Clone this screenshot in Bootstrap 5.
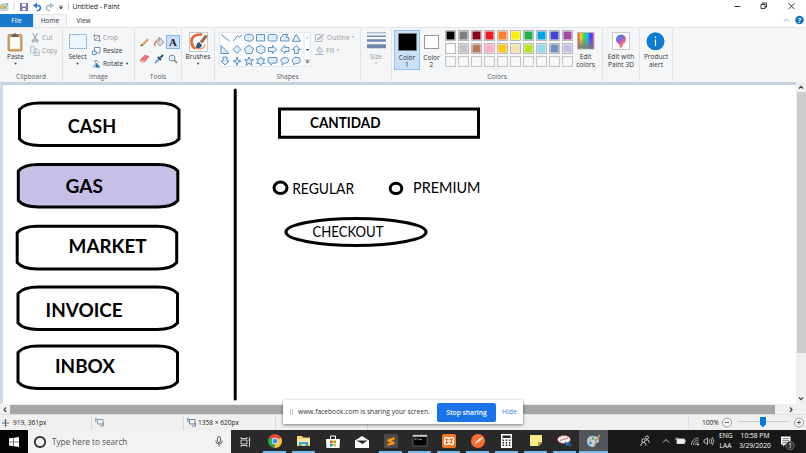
<!DOCTYPE html>
<html lang="en">
<head>
    <meta charset="UTF-8">
    <meta name="viewport" content="width=device-width, initial-scale=1">
    <title>Untitled - Paint</title>
    <link href="https://cdn.jsdelivr.net/npm/bootstrap@5.3.0/dist/css/bootstrap.min.css" rel="stylesheet">
    <script src="https://cdn.jsdelivr.net/npm/bootstrap@5.3.0/dist/js/bootstrap.bundle.min.js"></script>

    <style>
        body {
            font-family: "Open Sans", "Noto Sans", sans-serif;
            font-size: 6.6px;
            line-height: 7.5px;
            color: #333;
            width: 806px;
            height: 453px;
            overflow: hidden;
            white-space: nowrap;
        }

        svg { display: block; flex: none; overflow: visible; }

        .title-bar { height: 14px; color: #111; font-size: 6.8px; }
        .doc-title { margin-left: 2.5px; }
        .tab-bar { height: 13px; font-size: 6.5px; }
        .file-tab { width: 33px; background: #1979ca; color: #fff; }
        .home-tab { width: 34px; background: #f5f6f7; border: 1px solid #e2e4e7; border-bottom: 0; }
        .view-tab { width: 33px; }

        .ribbon { height: 55px; background: #f5f6f7; border-top: 1px solid #e3e5e8; }
        .group { border-right: 1px solid #e2e3e4; height: 52px; margin-top: 1px; flex: none; }
        .group-body { height: 43px; }
        .group-label { height: 9px; line-height: 9px; color: #5c5c5c; text-align: center; }
        .tool { padding-top: 3px; text-align: center; flex: none; }
        .tool svg { margin: 0 auto 1px; }
        .caret { font-size: 4px; line-height: 5px; }
        .faded { color: #999; }
        .faded .caret { font-size: 3px; }
        .tool-rows { padding-top: 2px; }
        .tool-row { height: 13px; gap: 2px; }
        .g-clip { width: 63px; }
        .g-image { width: 72px; }
        .g-tools { width: 47px; }
        .g-brush { width: 33px; }
        .g-shapes { width: 146px; }
        .g-size { width: 31px; }
        .g-colors { width: 211px; }
        .g-3d { width: 37px; }
        .g-alert { width: 33px; }
        .tool-paste { width: 31px; }
        .tool-select { width: 29px; }
        .tool-edit { width: 25px; }
        .tools-grid { display: grid; grid-template-columns: repeat(3, 14px); grid-auto-rows: 17px; padding: 4px 0 0 2px; justify-content: center; place-items: center; }
        .text-tool { width: 14px; height: 14px; background: #c9e0f7; border: 1px solid #82b5e8; font: bold 11px/12px "Liberation Serif", serif; color: #222; text-align: center; }
        .shape-list { margin: 3px 0 0 4px; }
        .slot { width: 23px; height: 40px; border: 1px solid transparent; padding-top: 2px; margin-top: 1px; text-align: center; flex: none; line-height: 7.2px; }
        .slot.chosen { background: #c9e0f7; border-color: #92c0ea; width: 26px; margin-left: 2px; }
        .slot-name { padding-top: 2.5px; }
        .ink { border: 1px solid #999; box-shadow: inset 0 0 0 1px #fff; margin: 0 auto; }
        .ink-first { width: 19px; height: 18px; background: #000; border-color: #777; box-shadow: none; }
        .ink-second { width: 15px; height: 14px; margin: 2px auto; background: #fff; }
        .palette { display: grid; grid-template-columns: repeat(10, 11px); grid-auto-rows: 11px; gap: 2px; margin: 1px 0 0 2px; height: 37px; }
        .swatch { border: 1px solid #bbb; box-shadow: inset 0 0 0 .5px #eee; }
        .swatch.empty { background: #f8f8f9; border-color: #c6c6c6; }

        .workspace { height: 322px; }
        .easel { width: 796px; height: 322px; background: #fff; border-top: 3px solid #c8d1e0; border-left: 3px solid #d0dbea; flex: none; }
        .v-scroll { width: 10px; background: #f0f0f0; }
        .v-arrow { height: 10px; }
        .v-thumb { height: 261px; margin-left: 1px; background: #cdcdcd; }
        .h-scroll { height: 10px; background: #f0f0f0; }
        .h-thumb { width: 765px; height: 9px; background: #a6a6a6; }
        .drawing text { font-family: Lato, sans-serif; fill: #000; }

        .status-bar { height: 16px; background: #f0f0f0; border-top: 1px solid #e0e0e0; font-size: 6.6px; color: #222; }
        .status-cell { width: 92px; height: 15px; border-right: 1px solid #dadada; flex: none; }
        .status-cell .size-icon { margin-left: 3px; }
        .zoom-cell { width: 118px; height: 15px; padding-left: 13px; }

        .taskbar { height: 23px; background: #292929; color: #fff; }
        .start { width: 28px; background: #050505; }
        .search { width: 203px; background: #f2f2f2; color: #555; font-size: 8.2px; gap: 6px; padding: 0 8px 0 6px; }
        .app { width: 29px; height: 23px; flex: none; }
        .app-line { width: 23px; height: 2px; background: #76b9ed; }
        .app.active-app { background: #50565b; }
        .active-app .app-line { width: 29px; }
        .tray { background: #181818; font-size: 6.7px; line-height: 10px; text-align: center; }
        .lang { margin-top: 1px; width: 13px; }
        .clock { margin: 1px 0 0 4px; width: 38px; }

        .share-bar { left: 283px; top: 400px; width: 240px; height: 24px; background: #fff; box-shadow: 0 1px 3px rgba(0, 0, 0, .5); font-size: 6.65px; color: #333; padding-left: 7px; }
        .share-text { margin-left: 5px; width: 139px; }
        .stop-btn { width: 59px; height: 19px; background: #1a73e8; color: #fff; border-radius: 2px; font-size: 6.7px; font-weight: 600; padding: 0; line-height: 19px; border: 0; }
        .hide-link { color: #3b78e7; font-size: 6.8px; margin-left: 6px; }
    </style>
</head>
<body class="position-relative bg-white">

<header class="title-bar d-flex align-items-center">
    <svg width="70" height="14" viewBox="0 0 70 14">
        <path d="M0 5l5-2 3 1v6l-7 1z" fill="#cfe3ee" stroke="#8fb2c8" stroke-width=".6"/>
        <path d="M1 9V6M3 9V4M5 9V6" stroke="#e0a040" stroke-width="1.3"/>
        <path d="M4 9l4-6" stroke="#58a55a"/>
        <path d="M14 3v7M68.500 3v7" stroke="#bbb" stroke-width=".7"/>
        <path d="M20.500 3.500h7v7h-7z" fill="#8877bd" stroke="#7563b0"/>
        <path d="M22 3.500h4v3h-4zM22.500 8h3v2.500h-3z" fill="#fff"/>
        <path d="M35 5.500h3q2.500.3 2.500 2.500T37 10.700" fill="none" stroke="#2f7dc8" stroke-width="1.600"/>
        <path d="M37 2.500v6l-4-3z" fill="#2f7dc8"/>
        <path d="M52 5.500h-3q-2.500.3-2.500 2.500T50 10.700" fill="none" stroke="#a9bccf" stroke-width="1.600"/>
        <path d="M50 2.500v6l4-3z" fill="#a9bccf"/>
        <path d="M59 6h4M59.500 7.500h3L61 9z" fill="#333" stroke="#333" stroke-width=".6"/>
    </svg>
    <span class="doc-title">Untitled - Paint</span>
    <svg class="ms-auto" width="72" height="14" viewBox="0 0 72 14" fill="none" stroke="#222" stroke-width=".9">
        <path d="M.5 6.500h6M27 4.500h4v4h-4zM28.500 4.500v-1.500h4v4h-1.500M54.500 3.200l6 6M60.500 3.200l-6 6"/>
    </svg>
</header>

<nav class="tab-bar d-flex text-center">
    <div class="file-tab d-flex align-items-center justify-content-center">File</div>
    <div class="home-tab d-flex align-items-center justify-content-center">Home</div>
    <div class="view-tab d-flex align-items-center justify-content-center">View</div>
    <svg class="ms-auto" width="24" height="13" viewBox="782 14 24 13">
        <path d="M784 21.500l2.500-2.500 2.500 2.500" fill="none" stroke="#888" stroke-width=".8"/>
        <circle cx="799.500" cy="20" r="4.300" fill="#1272c4"/>
        <text x="797.700" y="22.500" font-size="7" font-weight="700" fill="#fff">?</text>
    </svg>
</nav>

<section class="ribbon d-flex">
    <div class="group g-clip">
        <div class="group-body d-flex">
            <div class="tool tool-paste">
                <svg width="17" height="20" viewBox="0 0 17 20">
                    <rect x="1" y="2.500" width="14" height="16.500" rx="1" fill="#d9a760" stroke="#a77a3d" stroke-width=".7"/>
                    <path d="M3 5h10v12H3z" fill="#fcfcfc" stroke="#aaa" stroke-width=".3"/>
                    <path d="M4.500 2.500h2q1.500-3 3 0h2v2.500h-7z" fill="#666"/>
                </svg>
                <div>Paste</div><div class="caret">▼</div>
            </div>
            <div class="faded tool-rows">
                <div class="tool-row d-flex align-items-center">
                    <svg width="9" height="10" viewBox="0 0 9 10" fill="none" stroke="#929aa5" stroke-width="1"><path d="M1.700 0l3.800 7M6.500 0L3 7"/><circle cx="2.300" cy="8" r="1.200"/><circle cx="6" cy="8" r="1.200"/></svg>
                    <span>Cut</span>
                </div>
                <div class="tool-row d-flex align-items-center">
                    <svg width="9" height="10" viewBox="1 0 9 10" fill="#eef2f7" stroke="#a9b6c6" stroke-width=".8"><path d="M.5.500h3.500l1.500 1.500v5h-5zM4 3h3.500l2 2v4.500H4z"/><path d="M5.500 6h2.500M5.500 7.700h2.500"/></svg>
                    <span>Copy</span>
                </div>
            </div>
        </div>
        <div class="group-label">Clipboard</div>
    </div>

    <div class="group g-image">
        <div class="group-body d-flex">
            <div class="tool tool-select">
                <svg width="18" height="20" viewBox="0 0 18 20"><rect x=".5" y="2.500" width="17" height="14" fill="#edf5fc" stroke="#4383bd" stroke-width=".8" stroke-dasharray="1.500 .8"/></svg>
                <div>Select</div><div class="caret">▼</div>
            </div>
            <div class="tool-rows">
                <div class="tool-row d-flex align-items-center faded">
                    <svg width="9" height="8" viewBox="-1 0 9 8" fill="none" stroke="#9aa5b1"><path d="M1.500 0v6.500H8M0 1.500h6.500V8M2 6l5-5"/></svg>
                    <span>Crop</span>
                </div>
                <div class="tool-row d-flex align-items-center">
                    <svg width="9" height="8" viewBox="0 0 9 8" fill="#fff" stroke="#3f76a8" stroke-width=".8"><path d="M2.500.500h5.500v5.500H2.500z"/><path d="M.5 4h3.500v3.500H.5z"/></svg>
                    <span>Resize</span>
                </div>
                <div class="tool-row d-flex align-items-center">
                    <svg width="9" height="8" viewBox="0 0 9 8"><path d="M3.500 7.500V2l5 5.500z" fill="#2474b5"/><path d="M0 7.500h3V4z" fill="#9ac4e6"/><path d="M2 1.500q3-2.500 4.500 1" fill="none" stroke="#3974a7" stroke-width=".8"/></svg>
                    <span>Rotate</span><span class="caret">▼</span>
                </div>
            </div>
        </div>
        <div class="group-label">Image</div>
    </div>

    <div class="group g-tools">
        <div class="group-body tools-grid">
            <svg width="10" height="10" viewBox="0 0 10 10"><path d="M2 8l6-6" stroke="#e7b55e" stroke-width="2"/><path d="M2.700 8.700l6-6" stroke="#a77632" stroke-width=".6"/><path d="M.5 9.500l.8-2.500 1.700 1.700z" fill="#444"/></svg>
            <svg width="11" height="10" viewBox="0 0 11 10"><path d="M2 4l4-3 4 4-4 4z" fill="#d5dde7" stroke="#71879e" stroke-width=".8"/><path d="M5 5V0" stroke="#c97a5b"/><path d="M2.500 4Q0 6 1 9" fill="none" stroke="#db7b5b" stroke-width="1.500"/></svg>
            <div class="text-tool">A</div>
            <svg width="10" height="9" viewBox="0 0 10 9"><path d="M0 6l5-5 4 1.500L4.500 8 1 8z" fill="#e87979" stroke="#c95d5d" stroke-width=".5"/><path d="M0 6l3.500.5 1 1.500H1z" fill="#f7b1ab"/></svg>
            <svg width="10" height="10" viewBox="0 0 10 10"><path d="M1 9l5-5" stroke="#6f9dc4" stroke-width="1.800"/><path d="M4 3l3 3M6.500 3.500L9 1" stroke="#244f7d" stroke-width="2"/></svg>
            <svg width="10" height="10" viewBox="0 0 10 10"><circle cx="4" cy="4" r="3" fill="#dceefc" stroke="#7e8d9c"/><path d="M6.300 6.300L9 9" stroke="#8b7358" stroke-width="1.500"/></svg>
        </div>
        <div class="group-label">Tools</div>
    </div>

    <div class="group g-brush">
        <div class="tool">
            <svg width="19" height="20" viewBox="0 0 19 20">
                <rect x=".5" y=".5" width="18" height="19" fill="#fff" stroke="#b9b9b9" stroke-width=".8"/>
                <path d="M13 2.500Q3 2 2.500 9q0 6 4 7.500" fill="none" stroke="#dc6034" stroke-width="2.600"/>
                <path d="M4 11q1 6 7 6 5-1 5-5" fill="none" stroke="#ee9a72" stroke-width="1.500"/>
                <path d="M12 10.500l5.500-7" stroke="#9b6a48" stroke-width="3"/><path d="M7 16q0-5 3-6l3 3q-1 4-6 3z" fill="#31547d"/>
            </svg>
            <div>Brushes</div><div class="caret">▼</div>
        </div>
    </div>

    <div class="group g-shapes">
        <div class="group-body d-flex">
            <svg class="shape-list" width="92" height="35" viewBox="219 32 92 35">
                <path d="M219.500 32.500h91v34h-91z" fill="#fafcfe" stroke="#dbe1e7" stroke-width=".7"/>
                <path d="M304 32.500v34" stroke="#dbe1e7" stroke-width=".7"/>
                <g fill="#e0eefa" stroke="#3c79ae" stroke-width=".8">
                    <path d="M221 34.500l8.500 6.500"/>
                    <path d="M233 40.500q2 0 3-3t2.500-1 3.500-2" fill="none"/>
                    <ellipse cx="249" cy="37.700" rx="4.500" ry="3.500"/>
                    <path d="M256.500 34.500h8v6.500h-8z"/>
                    <rect x="268" y="34.500" width="9" height="6.500" rx="1.500"/>
                    <path d="M280.500 41v-3l2.500-3.500h5l-2 3h2.800v3.500z"/>
                    <path d="M296.300 34.300l4 7h-8z"/>
                    <path d="M221 45.500v8h8z"/>
                    <path d="M237 45.500l4 4-4 4-4-4z"/>
                    <path d="M249 45.300l4.500 3.200-1.800 5h-5.400l-1.800-5z"/>
                    <path d="M260.700 45.300l4.300 2.200v4.200l-4.300 2.200-4.300-2.200v-4.200z"/>
                    <path d="M268.500 47.500h4v-2l4.300 4-4.300 4v-2h-4z"/>
                    <path d="M289 47.500h-4v-2l-4.300 4 4.300 4v-2h4z"/>
                    <path d="M294.300 53.500v-4h-2l4-4 4 4h-2v4z"/>
                    <path d="M223 57v4h-2l4 4 4-4h-2v-4z"/>
                    <path d="M237 57l1 3.200 3 1-3 1-1 3.200-1-3.200-3-1 3-1z"/>
                    <path d="M249 57l1.200 2.800h3.300l-2.500 2 1 3.500-3-2-3 2 1-3.500-2.500-2h3.300z"/>
                    <path d="M260.700 56.800l1.300 2.200h2.700l-1.400 2.200 1.400 2.200H262l-1.300 2.200-1.300-2.200h-2.700l1.400-2.200-1.400-2.200h2.700z"/>
                    <path d="M269 57.500h7q1 0 1 1v3.500q0 1-1 1h-3l-2 2.200v-2.200h-2q-1 0-1-1v-3.500q0-1 1-1z"/>
                    <path d="M282 65l.5-2.200q-2-1-1.800-2.500.5-2.800 4-2.800t4.300 2.800q-.5 3-4.500 3z"/>
                    <path d="M293 58.500q1.500-2 4-1 3-.5 3 2 1.200 2.500-1 3.500-1.500 1-3.500.5l-1.500 1.500-.2-2q-2-1-1.300-2.500-.6-1 .5-2z"/>
                </g>
                <path d="M306 38.500l1.500-1.500 1.500 1.500z" fill="#aaa"/>
                <path d="M305.700 49h3.600l-1.800 2zM305.700 61.500h3.600l-1.800 2zM305.500 59.800h4v.8h-4z" fill="#444"/>
            </svg>
            <div class="faded tool-rows ps-1">
                <div class="tool-row d-flex align-items-center">
                    <svg width="10" height="8" viewBox="0 0 10 8" fill="none" stroke="#a1adb8" stroke-width=".8"><path d="M7 3v4.500H.5V.500H6"/><path d="M2.500 6L8.500.500" stroke-width="1.500"/></svg>
                    <span>Outline</span><span class="caret">▼</span>
                </div>
                <div class="tool-row d-flex align-items-center">
                    <svg width="9" height="9" viewBox="0 0 9 9" fill="#dfe5eb" stroke="#a1adb8" stroke-width=".8"><path d="M1.500 4l3-3 3.500 4-3 3zM0 8.500h9M4 4V0"/></svg>
                    <span>Fill</span><span class="caret">▼</span>
                </div>
            </div>
        </div>
        <div class="group-label">Shapes</div>
    </div>

    <div class="group g-size">
        <div class="tool faded">
            <svg width="19" height="20" viewBox="0 0 19 20" fill="#7389b0"><path d="M0 .5h19v.8H0zM0 3.500h19v1.600H0zM0 7.300h19v2.500H0zM0 12.300h19v4H0z"/></svg>
            <div>Size</div><div class="caret">▼</div>
        </div>
    </div>

    <div class="group g-colors">
        <div class="group-body d-flex">
            <div class="slot chosen">
                <div class="ink ink-first"></div>
                <div class="slot-name">Color<br>1</div>
            </div>
            <div class="slot">
                <div class="ink ink-second"></div>
                <div class="slot-name">Color<br>2</div>
            </div>
            <div class="palette" id="palette"></div>
            <div class="tool tool-edit">
                <svg width="17" height="20" viewBox="0 0 17 20">
                    <defs>
                        <linearGradient id="hues"><stop offset="0" stop-color="#f33"/><stop offset=".2" stop-color="#fc3"/><stop offset=".4" stop-color="#3d4"/><stop offset=".6" stop-color="#2be"/><stop offset=".8" stop-color="#43f"/><stop offset="1" stop-color="#e3b"/></linearGradient>
                        <linearGradient id="dusk" x2="0" y2="1"><stop offset=".3" stop-color="#888" stop-opacity="0"/><stop offset="1" stop-color="#777"/></linearGradient>
                    </defs>
                    <rect x=".5" y=".5" width="16.500" height="16.500" fill="url(#hues)" stroke="#bbb"/><rect x="1" y="1" width="15.500" height="15.500" fill="url(#dusk)"/>
                </svg>
                <div>Edit<br>colors</div>
            </div>
        </div>
        <div class="group-label">Colors</div>
    </div>

    <div class="group g-3d">
        <div class="tool">
            <svg width="18" height="20" viewBox="0 0 18 20">
                <defs><linearGradient id="drop" x2=".7" y2="1"><stop offset="0" stop-color="#24a8ed"/><stop offset=".4" stop-color="#7569dd"/><stop offset=".65" stop-color="#ec5a9d"/><stop offset="1" stop-color="#f8a23b"/></linearGradient></defs>
                <rect x=".5" y=".5" width="17" height="17" fill="#fff" stroke="#c9c9c9"/>
                <path d="M9 2.500q5 .3 5 5 0 3-3 4.500l-1 3.500q-1 1.300-2 0L7 12Q4 10.500 4 7.500q0-4.700 5-5z" fill="url(#drop)"/>
            </svg>
            <div>Edit with<br>Paint 3D</div>
        </div>
    </div>
    <div class="group g-alert">
        <div class="tool">
            <svg width="18" height="20" viewBox="0 0 18 20"><circle cx="8.500" cy="9.300" r="9" fill="#0f7bd0"/><path d="M8.500 7.500v6.500M8.500 4.500v1.500" stroke="#fff" stroke-width="1.200"/></svg>
            <div>Product<br>alert</div>
        </div>
    </div>
</section>

<main class="workspace d-flex">
    <div class="easel">
        <svg class="drawing" width="793" height="319" viewBox="3 85 793 319">
            <defs>
                <path id="menuBox" d="M0 6.500c3-3.500 10-6.500 20-6.500h119.500c10 0 17 3 20 6.500v29.600c-3 3.500-10 6.500-20 6.500H20c-10 0-17-3-20-6.500z"/>
            </defs>
            <g fill="#fff" stroke="#000" stroke-width="3" stroke-linejoin="round">
                <use href="#menuBox" x="19.500" y="102.900"/>
                <use href="#menuBox" x="18.300" y="164.400" fill="#c8bfe7"/>
                <use href="#menuBox" x="17.200" y="226.300"/>
                <use href="#menuBox" x="18" y="287"/>
                <use href="#menuBox" x="18" y="346"/>
            </g>
            <g fill="#fff" stroke="#000" stroke-width="3">
                <path d="M235.200 90v309" stroke-linecap="round"/>
                <path d="M279.500 109h199v28.200h-199z"/>
                <ellipse cx="280.500" cy="187.800" rx="6.500" ry="5.700"/>
                <ellipse cx="396" cy="188.400" rx="5.800" ry="5.100"/>
                <ellipse cx="356" cy="232" rx="70" ry="13.400"/>
            </g>
            <g font-size="18.500" font-weight="700">
                <text x="67.700" y="132.700" textLength="48.500" lengthAdjust="spacingAndGlyphs">CASH</text>
                <text x="65.500" y="193.400" textLength="37.500" lengthAdjust="spacingAndGlyphs">GAS</text>
                <text x="68.600" y="253" textLength="78" lengthAdjust="spacingAndGlyphs">MARKET</text>
                <text x="45.600" y="316.700" textLength="77" lengthAdjust="spacingAndGlyphs">INVOICE</text>
                <text x="55" y="373.300" textLength="60" lengthAdjust="spacingAndGlyphs">INBOX</text>
            </g>
            <text x="310" y="127.600" font-size="14.300" font-weight="700" textLength="70.500" lengthAdjust="spacingAndGlyphs">CANTIDAD</text>
            <g font-size="14.500">
                <text x="292.200" y="193.500" textLength="62" lengthAdjust="spacingAndGlyphs">REGULAR</text>
                <text x="413" y="192.500" textLength="67.500" lengthAdjust="spacingAndGlyphs">PREMIUM</text>
                <text x="312.500" y="237.200" textLength="71" lengthAdjust="spacingAndGlyphs">CHECKOUT</text>
            </g>
        </svg>
    </div>
    <div class="v-scroll d-flex flex-column">
        <svg class="v-arrow" width="10" height="10" viewBox="0 0 10 10" fill="none" stroke="#444" stroke-width="1.200"><path d="M3 6.500l2-2.200 2 2.200"/></svg>
        <div class="v-thumb"></div>
        <svg class="v-arrow mt-auto" width="10" height="10" viewBox="0 0 10 10" fill="none" stroke="#444" stroke-width="1.200"><path d="M3 3.500l2 2.200 2-2.200"/></svg>
    </div>
</main>
<div class="h-scroll d-flex align-items-center">
    <svg width="10" height="9" viewBox="0 0 10 9" fill="none" stroke="#444" stroke-width="1.200"><path d="M6 2.500L4 4.700 6 7"/></svg>
    <div class="h-thumb"></div>
    <svg width="31" height="9" viewBox="775 0 31 9" fill="none" stroke="#444" stroke-width="1.200"><path d="M790 2.500l2 2.200-2 2.300"/></svg>
</div>

<footer class="status-bar d-flex align-items-center">
    <div class="status-cell d-flex align-items-center">
        <svg width="13" height="10" viewBox="0 0 13 10" stroke="#54697e" stroke-width="1" fill="none"><path d="M2 5h7M5.500 1.500v7M4.500 2.500l1-1 1 1M4.500 7.500l1 1 1-1"/></svg>
        <span>919, 361px</span>
    </div>
    <div class="status-cell d-flex align-items-center">
        <svg class="size-icon" width="9" height="9" viewBox="0 0 9 9" stroke="#68819d" stroke-width=".8" fill="none"><path d="M2.500 1.500H8v4.500H2.500zM0 1h2M.8 0v4M5 8h3.500V5"/></svg>
    </div>
    <div class="status-cell d-flex align-items-center">
        <svg class="size-icon" width="11" height="9" viewBox="0 0 11 9" stroke="#45688e" stroke-width=".8" fill="none"><path d="M2.500 1.500H8v4.500H2.500zM0 1h2M.8 0v4M5 8h3.500V5"/></svg>
        <span>1358 × 620px</span>
    </div>
    <div class="status-cell"></div>
    <div class="zoom-cell d-flex align-items-center ms-auto border-start">
        <span>100%</span>
        <svg class="ms-auto" width="86" height="15" viewBox="720 415 86 15" fill="none" stroke="#777" stroke-width=".7">
            <circle cx="727" cy="422.500" r="4.500" fill="#fafafa"/><path d="M724.800 422.500h4.400" stroke="#222"/>
            <path d="M738 421.500h50" stroke="#ccc" stroke-width="1"/>
            <path d="M760 417h6v7.500l-3 2.700-3-2.700z" fill="#0a78d6" stroke="none"/>
            <circle cx="799" cy="422.500" r="4.500" fill="#fafafa"/><path d="M796.800 422.500h4.400M799 420.300v4.400" stroke="#222"/>
        </svg>
    </div>
</footer>

<footer class="taskbar d-flex">
    <div class="start d-flex align-items-center justify-content-center">
        <svg width="10" height="10" viewBox="0 0 10 10" fill="#fff"><path d="M0 1.500l4.500-.7v4H0zM5 .7L10 0v4.800H5zM0 5.300h4.500v4L0 8.600zM5 5.300h5V10l-5-.7z"/></svg>
    </div>
    <div class="search d-flex align-items-center">
        <svg width="12" height="12" viewBox="0 0 12 12"><circle cx="6" cy="6" r="5.200" fill="none" stroke="#222" stroke-width="1.700"/></svg>
        <span>Type here to search</span>
        <svg class="ms-auto" width="8" height="11" viewBox="0 0 8 11" fill="none" stroke="#444" stroke-width=".8"><rect x="2.500" y=".5" width="3" height="6" rx="1.500"/><path d="M1 4.500v1q0 2.500 3 2.500t3-2.500v-1M4 8v2.500"/></svg>
    </div>
    <div class="d-flex" id="apps">
        <div class="app"><svg width="11" height="10" viewBox="0 0 11 10" fill="none" stroke="#ddd" stroke-width=".9"><path d="M1 3h6v4H1zM1 0v1.500h6V0M1 10V8.500h6V10M9.500 0v10M8.500 3h2"/></svg></div>
        <div class="app open"><svg width="14" height="14" viewBox="0 0 14 14"><path d="M7 7L1 3.500A7 7 0 0 1 13 3.500z" fill="#e34a3b"/><path d="M7 7L1 3.500A7 7 0 0 0 6.500 14z" fill="#35a853"/><path d="M7 7l6-3.500A7 7 0 0 1 6.500 14z" fill="#f9c62f"/><circle cx="7" cy="7" r="3.200" fill="#fff"/><circle cx="7" cy="7" r="2.500" fill="#4788f3"/></svg></div>
        <div class="app open"><svg width="13" height="12" viewBox="0 0 13 12"><path d="M0 1h5l1 1.500h7V11H0z" fill="#f4d675"/><path d="M0 4h13v4H0z" fill="#fce9a5"/><path d="M2 11V7h9v4H8.500V9h-4v2z" fill="#3ca1dc"/></svg></div>
        <div class="app"><svg width="14" height="14" viewBox="0 0 14 14"><path d="M0 4h14l-.5 9H.5z" fill="#fff"/><path d="M4.500 4V1h5v3" fill="none" stroke="#fff"/><path d="M4 5.500h2.700v2.700H4z" fill="#f25022"/><path d="M7.300 5.500H10v2.700H7.300z" fill="#7fba00"/><path d="M4 8.800h2.700v2.700H4z" fill="#00a4ef"/><path d="M7.300 8.800H10v2.700H7.300z" fill="#ffb900"/></svg></div>
        <div class="app"><svg width="14" height="12" viewBox="0 0 14 12"><path d="M0 4.500L7 0l7 4.500V12H0z" fill="#fff"/><path d="M1.500 4.500h11L7.500 8z" fill="#292929"/></svg></div>
        <div class="app open"><svg width="14" height="14" viewBox="0 0 14 14"><rect width="14" height="14" rx="1" fill="#4b4b4b"/><path d="M3.500 5.500l7-2.500v2.500L7 6.700l3.500 1.200v2L3.500 12V9.800L7 8.600 3.500 7.500z" fill="#ff9800"/></svg></div>
        <div class="app open"><svg width="14" height="11" viewBox="0 0 14 11"><path d="M0 0h14v11H0z" fill="#050505" stroke="#999" stroke-width=".5"/><path d="M0 0h14v1.800H0z" fill="#ccc"/><path d="M1.500 4h2M4.500 4h1M6.500 4.500h2" stroke="#fff" stroke-width=".8"/></svg></div>
        <div class="app open"><svg width="14" height="14" viewBox="0 0 14 14"><rect width="14" height="14" rx="2" fill="#f37623"/><path d="M4.500 3.500q2.500 0 2.500 2 0-2 2.500-2t2 2q0 1.500-1.500 1.500 1.500 0 1.500 1.500 0 2-2 2T7 8.500q0 2-2.500 2t-2-2Q2.500 7 4 7 2.500 7 2.500 5.500q0-2 2-2zM5 7h4" fill="none" stroke="#fff" stroke-width="1.300"/></svg></div>
        <div class="app open"><svg width="14" height="14" viewBox="0 0 14 14"><circle cx="7" cy="7" r="7" fill="#fb6b37"/><path d="M3.500 10.500l2-3.500L9 4l1.500 1.500-3.500 3zM9.500 3.800q1.500-1 2 .3t-1 1.500z" fill="#ffe1d4"/></svg></div>
        <div class="app open"><svg width="11" height="14" viewBox="0 0 11 14"><path d="M0 0h11v14H0z" fill="#fff"/><path d="M1.500 1.500h8V4h-8z" fill="#292929"/><path d="M1.500 6.300h8M1.500 8.800h8M1.500 11.300h8" stroke="#292929" stroke-width="1.400" stroke-dasharray="1.600 1.600"/></svg></div>
        <div class="app open"><svg width="12" height="11" viewBox="0 0 12 11"><path d="M0 0h12v7H8v4H0z" fill="#f9e989"/><path d="M12 7v1L9 11H8V7z" fill="#a89b4e"/></svg></div>
        <div class="app open"><svg width="15" height="14" viewBox="0 0 15 14"><ellipse cx="7" cy="5.500" rx="6.500" ry="4" fill="#f4f4f4" stroke="#c33d48" stroke-width=".8"/><path d="M3 6.500l8-2.500" stroke="#d35a62" stroke-width="1"/><path d="M8 8l4 3M12 8l-3 4" stroke="#236db4" stroke-width="1.500"/><circle cx="13" cy="10.500" r="1.300" fill="none" stroke="#236db4"/></svg></div>
        <div class="app open active-app"><svg width="15" height="14" viewBox="0 0 15 14"><path d="M1 7q0-5 6-5t6 5q0 2-3 2-1 0-1 2t-3 2q-5-1-5-6z" fill="#b8d9ea" stroke="#668da5" stroke-width=".5"/><circle cx="4" cy="6" r="1.200" fill="#e3a23c"/><circle cx="7" cy="4.500" r="1.200" fill="#4c9f5a"/><circle cx="10" cy="6" r="1.200" fill="#d45b4d"/><circle cx="4.500" cy="9" r="1.200" fill="#3679bc"/><path d="M8 12l5.500-11" stroke="#d9a35a" stroke-width="1.500"/></svg></div>
    </div>
    <div class="tray d-flex flex-grow-1">
        <svg width="111" height="23" viewBox="608 430 111 23" fill="none" stroke="#ddd" stroke-width=".9">
            <circle cx="643.500" cy="440.500" r="1.700"/><path d="M641 446v-1.500q.3-2 2.500-2t2.500 2v1.500"/><circle cx="647" cy="437.500" r="1.500"/><path d="M645.800 440q3-1 3.400 2v1"/>
            <path d="M663 442.500l3-3 3 3"/>
            <path d="M677 439h7.500v4.500H677z" fill="#eee"/><path d="M676 437.500v2.500M678 437.500v2.500M685.500 440.500v1.500"/>
            <path d="M691.500 445q0-6.500 7-7M693.500 445q0-4.500 5-5M695.500 445q0-3 3-3" stroke="#aaa"/><circle cx="698" cy="444.500" r=".7" fill="#fff"/>
            <path d="M704 439.800h1.500l2-2v7l-2-2H704zM709 439.500q1.300 1.800 0 3.500M710.700 438.300q2.200 3 0 6M712.300 437.200q3 4 0 8" stroke-width=".8"/>
        </svg>
        <div class="lang">ENG<br>LAA</div>
        <div class="clock">10:58 PM<br>3/29/2020</div>
        <svg width="30" height="23" viewBox="775 430 30 23">
            <path d="M782 436.500h9.500v8H786l-2 2v-2h-2z" fill="#fff"/><path d="M783.500 438.700h6.500M783.500 440.700h6.500M783.500 442.700h4" stroke="#333" stroke-width=".7"/>
            <circle cx="791" cy="445.500" r="4.200" fill="#333" stroke="#888" stroke-width=".7"/><text x="789.300" y="448" font-size="6.500" fill="#fff">1</text>
        </svg>
    </div>
</footer>

<div class="share-bar position-absolute d-flex align-items-center">
    <svg width="3" height="6" viewBox="0 0 3 6" stroke="#bbb" stroke-width=".8"><path d="M.5 0v6M2.500 0v6"/></svg>
    <span class="share-text">www.facebook.com is sharing your screen.</span>
    <button class="btn stop-btn">Stop sharing</button>
    <span class="hide-link">Hide</span>
</div>

<script>
    const colors = [
        "#000000", "#7f7f7f", "#880015", "#ed1c24", "#ff7f27", "#fff200", "#22b14c", "#00a2e8", "#3f48cc", "#a349a4",
        "#ffffff", "#c3c3c3", "#b97a57", "#ffaec9", "#ffc90e", "#efe4b0", "#b5e61d", "#99d9ea", "#7092be", "#c8bfe7"
    ];
    const palette = document.getElementById("palette");
    for (let i = 0; i < 30; i++) {
        const swatch = document.createElement("div");
        swatch.className = colors[i] ? "swatch" : "swatch empty";
        if (colors[i]) swatch.style.backgroundColor = colors[i];
        palette.appendChild(swatch);
    }

    // running apps get the blue line under the icon
    document.querySelectorAll("#apps .app").forEach(app => {
        app.classList.add("d-flex", "flex-column", "align-items-center");
        app.firstElementChild.classList.add("my-auto");
        if (app.classList.contains("open")) {
            const line = document.createElement("div");
            line.className = "app-line";
            app.appendChild(line);
        }
    });
</script>

</body>
</html>
